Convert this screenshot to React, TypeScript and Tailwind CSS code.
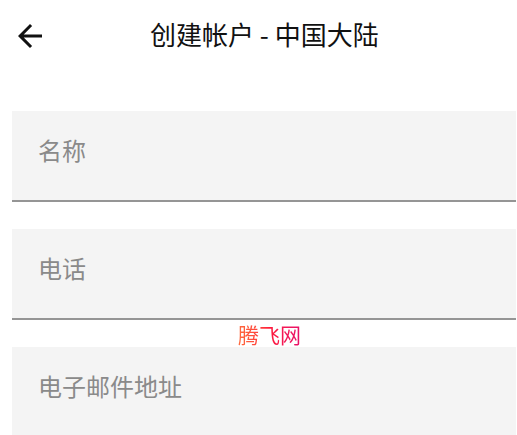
const fields = ["名称", "电话", "电子邮件地址"]

function BackArrow() {
  return (
    <svg viewBox="0 0 24 24" className="h-9 w-9 fill-[#111]">
      <path d="M20 11H7.83l5.59-5.59L12 4l-8 8 8 8 1.41-1.41L7.83 13H20v-2z" />
    </svg>
  )
}

export default function App() {
  return (
    <div className="relative h-[435px] w-[517px] overflow-hidden bg-white font-['Noto_Sans_CJK_SC',sans-serif]">
      <header className="flex h-[72px] items-center pl-3">
        <BackArrow />
        <h1 className="ml-[102px] pb-1 text-[26px] leading-none text-[#111]">创建帐户 - 中国大陆</h1>
      </header>

      <div className="mt-[39px] flex flex-col gap-[27px] pl-3 pr-px">
        {fields.map((label) => (
          <div
            key={label}
            className="flex h-[91px] shrink-0 items-center border-b-2 border-[#959595] bg-[#f4f4f4] pb-3 pl-[26px]"
          >
            <span className="text-[24px] leading-none text-[#8a8a8a]">{label}</span>
          </div>
        ))}
      </div>

      <span className="absolute left-[238px] top-[319px] bg-gradient-to-r from-[#ff6a3d] via-[#ff1a3a] to-[#e8106a] bg-clip-text text-[21px] leading-normal text-transparent">
        腾飞网
      </span>
    </div>
  )
}
